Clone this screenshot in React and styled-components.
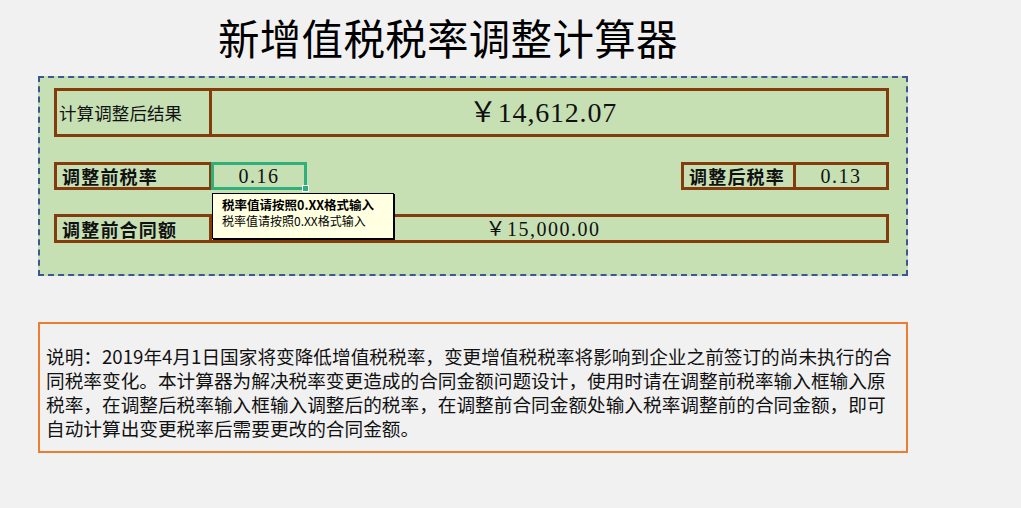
import React from "react";
import styled, { createGlobalStyle } from "styled-components";

const CJK = `"Noto Sans CJK SC", "Noto Sans", sans-serif`;
const NUM = `"Liberation Serif", "Noto Sans CJK SC", serif`;
const BROWN = "#843c0c";

const Global = createGlobalStyle`
  html, body { margin: 0; padding: 0; background: #f1f1f1; }
  body { font-family: ${CJK}; color: #111; }
`;

const Page = styled.div`
  width: 1021px;
  height: 508px;
  padding: 12px 0 0 38px;
  box-sizing: border-box;
  overflow: hidden;
`;

const Title = styled.h1`
  margin: 0 0 14px 180px;
  font-family: ${CJK};
  font-weight: 400;
  font-size: 41.5px;
  line-height: 50px;
  letter-spacing: 0.3px;
  color: #000;
`;

const Panel = styled.section`
  position: relative;
  width: 870px;
  height: 200px;
  box-sizing: border-box;
  background: #c6e0b4;
  border: 2px dashed #3b5896;
  padding: 10px 17px 0 14px;
  display: flex;
  flex-direction: column;
`;

const BoxRow = styled.div`
  display: grid;
  grid-template-columns: 155px 1fr;
  height: ${(p) => p.$h}px;
  box-sizing: border-box;
  border: 3px solid ${BROWN};
  margin-bottom: ${(p) => p.$mb || 0}px;
`;

const Label = styled.div`
  display: flex;
  align-items: center;
  border-right: 3px solid ${BROWN};
  padding-left: ${(p) => (p.$bold ? 5 : 2)}px;
  font-family: ${CJK};
  font-size: ${(p) => (p.$bold ? 18 : 17.5)}px;
  line-height: 1;
  font-weight: ${(p) => (p.$bold ? 700 : 400)};
  letter-spacing: ${(p) => (p.$bold ? 1.2 : 0.1)}px;
  color: #111;
  white-space: nowrap;
`;

const Value = styled.div`
  display: flex;
  align-items: center;
  justify-content: center;
  font-family: ${NUM};
  font-size: ${(p) => p.$size || 20}px;
  line-height: 1;
  letter-spacing: ${(p) => p.$ls ?? 1.5}px;
  color: #111;
  padding-right: ${(p) => p.$pr || 0}px;
`;

const RateRow = styled.div`
  display: flex;
  justify-content: space-between;
  height: 28px;
  margin-bottom: 24px;
`;

const Group = styled.div`
  display: flex;
`;

const RateLabel = styled.div`
  display: flex;
  align-items: center;
  box-sizing: border-box;
  width: ${(p) => p.$w}px;
  border: 3px solid ${BROWN};
  padding-left: 5px;
  font-family: ${CJK};
  font-size: 18px;
  line-height: 1;
  font-weight: 700;
  letter-spacing: 1.2px;
  white-space: nowrap;
  color: #111;
`;

const RateValue = styled(Value)`
  box-sizing: border-box;
  width: ${(p) => p.$w}px;
  border: 3px solid ${(p) => (p.$selected ? "#2fb07a" : BROWN)};
  border-left-width: ${(p) => (p.$selected ? 3 : 0)}px;
  margin-left: ${(p) => (p.$selected ? -1 : 0)}px;
  position: relative;
`;

const Handle = styled.span`
  position: absolute;
  right: -5px;
  bottom: -5px;
  width: 5px;
  height: 5px;
  background: #2fb07a;
  border: 1px solid #fff;
`;

const Comment = styled.div`
  position: absolute;
  left: 172px;
  top: 115px;
  width: 182px;
  height: 46px;
  box-sizing: border-box;
  background: #ffffe1;
  border: 1px solid #000;
  box-shadow: 1px 1px 0 #000;
  padding: 3px 0 0 9px;
  font-family: ${CJK};
  font-size: 12px;
  line-height: 16px;
  color: #000;
  white-space: nowrap;
`;

const CommentTitle = styled.div`
  font-weight: 700;
  font-size: 12.5px;
`;

const Note = styled.section`
  margin-top: 46px;
  width: 870px;
  height: 131px;
  box-sizing: border-box;
  border: 2px solid #ed7d31;
  padding: 20px 0 0 6px;
  font-family: ${CJK};
  font-size: 18.67px;
  line-height: 24px;
  color: #111;
`;

const NoteLine = styled.div`
  white-space: nowrap;
  height: 24px;
`;

const noteLines = [
  "说明：2019年4月1日国家将变降低增值税税率，变更增值税税率将影响到企业之前签订的尚未执行的合",
  "同税率变化。本计算器为解决税率变更造成的合同金额问题设计，使用时请在调整前税率输入框输入原",
  "税率，在调整后税率输入框输入调整后的税率，在调整前合同金额处输入税率调整前的合同金额，即可",
  "自动计算出变更税率后需要更改的合同金额。",
];

export default function App() {
  return (
    <>
      <Global />
      <Page>
        <Title>新增值税税率调整计算器</Title>
        <Panel>
          <BoxRow $h={49} $mb={25}>
            <Label>计算调整后结果</Label>
            <Value $size={28} $ls={0.8} $pr={12}>￥14,612.07</Value>
          </BoxRow>
          <RateRow>
            <Group>
              <RateLabel $w={158}>调整前税率</RateLabel>
              <RateValue $w={96} $selected>
                0.16
                <Handle />
              </RateValue>
            </Group>
            <Group>
              <RateLabel $w={115}>调整后税率</RateLabel>
              <RateValue $w={93}>0.13</RateValue>
            </Group>
          </RateRow>
          <BoxRow $h={29}>
            <Label $bold>调整前合同额</Label>
            <Value $pr={12}>￥15,000.00</Value>
          </BoxRow>
          <Comment>
            <CommentTitle>税率值请按照0.XX格式输入</CommentTitle>
            <div>税率值请按照0.XX格式输入</div>
          </Comment>
        </Panel>
        <Note>
          {noteLines.map((l) => (
            <NoteLine key={l}>{l}</NoteLine>
          ))}
        </Note>
      </Page>
    </>
  );
}
